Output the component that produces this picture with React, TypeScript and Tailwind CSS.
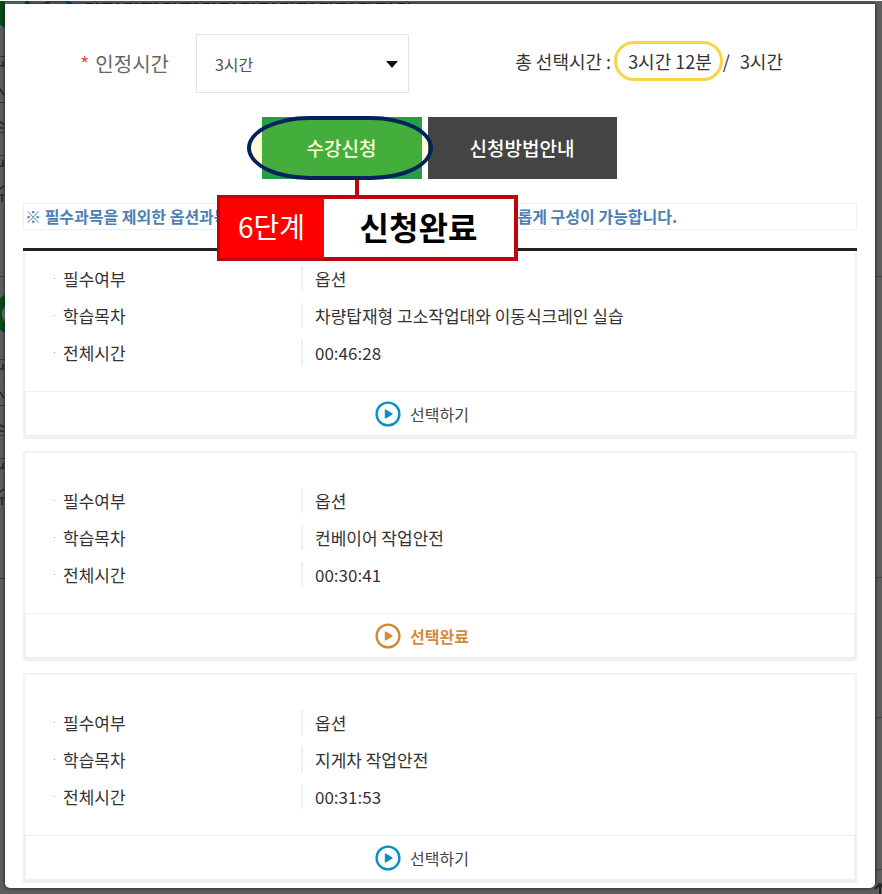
import React, { useState } from 'react';

interface Lesson {
  id: number;
  required: string;
  title: string;
  duration: string;
}

const LESSONS: Lesson[] = [
  { id: 1, required: '옵션', title: '차량탑재형 고소작업대와 이동식크레인 실습', duration: '00:46:28' },
  { id: 2, required: '옵션', title: '컨베이어 작업안전', duration: '00:30:41' },
  { id: 3, required: '옵션', title: '지게차 작업안전', duration: '00:31:53' },
];

const PlayIcon = () => (
  <svg width="26" height="26" viewBox="0 0 26 26" fill="none" aria-hidden="true">
    <circle cx="13" cy="13" r="11.4" stroke="currentColor" strokeWidth="2.4" />
    <path d="M10.5 9.2v7.6l6.6-3.8z" fill="currentColor" stroke="currentColor" strokeWidth="1.4" strokeLinejoin="round" />
  </svg>
);

// Dimmed page that shows around the modal edges
const Backdrop = () => (
  <div aria-hidden="true" className="absolute inset-0 overflow-hidden border-t border-white">
    <svg className="absolute left-0 top-0" width="100%" height="100%">
      <circle cx="12" cy="9" r="19" fill="#0b4a1c" />
      <path d="M5 2h20" stroke="#777" strokeWidth="3" />
      <circle cx="58" cy="15" r="19" fill="#124a68" />
      <path d="M50 2h16" stroke="#666" strokeWidth="2" />
      <circle cx="14" cy="313" r="21" fill="#0b4a1c" />
      <circle cx="14" cy="313" r="12" fill="#777" />
      <path d="M86 3H412" stroke="#222" strokeWidth="2" strokeDasharray="7 3 2 5 9 4 3 6" />
      <path d="M0 55.5H5M0 101.5H5M0 131.5H5M0 154.5H5M0 275.5H5M0 358.5H5M0 404.5H5M0 434.5H5M0 457.5H5M0 577.5H5" stroke="#3a3a3a" />
      <path
        d="M0 65h4M3 60v5M0 88l4 6M0 121l4 2M0 127h4M0 165h4M3 159v6M0 188l4-3M0 194h4M2 194v7M0 368h4M3 363v5M0 391l4 6M0 424l4 2M0 430h4M0 467h4M3 462v5M0 491l4-3M0 497h4M2 497v7"
        stroke="#262626"
        strokeWidth="1.5"
      />
      <path d="M875 275.5H882M875 576.5H882M875 716.5H882M875 868.5H882" stroke="#484848" />
      <path d="M875 888l5-5 5 5M880 883v11" stroke="#222" strokeWidth="2" fill="none" />
    </svg>
  </div>
);

interface LessonCardProps {
  lesson: Lesson;
  first: boolean;
  selected: boolean;
  onToggle: () => void;
}

const LessonCard: React.FC<LessonCardProps> = ({ lesson, first, selected, onToggle }) => {
  const rows = [
    ['필수여부', lesson.required],
    ['학습목차', lesson.title],
    ['전체시간', lesson.duration],
  ];

  return (
    <li>
      <div className={first ? 'border-t-3 border-[#222]' : 'border-t-2 border-[#f1f1f1]'} />
      <dl className={`border-x-2 border-[#f1f1f1] pb-5 ${first ? 'pt-[9px]' : 'pt-[29px]'}`}>
        {rows.map(([label, value]) => (
          <div key={label} className="flex h-[37px] items-center text-[17px] leading-[25px] text-[#333]">
            <dt className="flex w-[276px] shrink-0 items-center gap-2 pl-[29px]">
              <span className="size-px bg-[#999]" />
              {label}
            </dt>
            <dd className="border-l-2 border-[#eee] pl-3">{value}</dd>
          </div>
        ))}
      </dl>
      <div className="flex h-12 items-center justify-center border-x-3 border-t border-b-4 border-[#f0f0f0] pt-px pr-[36px]">
        <button
          type="button"
          onClick={onToggle}
          className={`flex items-center gap-[9px] text-[16px] leading-6 ${selected ? 'font-bold text-[#d58c38]' : 'text-[#444]'}`}
        >
          <span className={selected ? 'text-[#d08a35]' : 'text-[#0c8fc4]'}>
            <PlayIcon />
          </span>
          {selected ? '선택완료' : '선택하기'}
        </button>
      </div>
    </li>
  );
};

const App: React.FC = () => {
  const [hours, setHours] = useState('3');
  const [selected, setSelected] = useState<number[]>([2]);

  const toggle = (id: number) => {
    setSelected(prev => (prev.includes(id) ? prev.filter(v => v !== id) : [...prev, id]));
  };

  return (
    <div className="relative min-h-screen bg-[#5e5e5e] pt-1 pr-[7px] pb-[6px] pl-[5px] font-['Noto_Sans_CJK_KR','Noto_Sans',sans-serif]">
      <Backdrop />
      <main className="relative rounded-b-[5px] bg-white px-[18px] pt-[30px] pb-[5px] shadow-[0_0_4px_rgba(0,0,0,0.7)]">
        <div className="flex items-center justify-between pr-[74px] pl-[57px]">
          <div className="flex items-center">
            <label htmlFor="hours" className="text-[20px] leading-7 text-[#666]">
              <span className="mr-[6px] text-[#f05050]">*</span>
              인정시간
            </label>
            <div className="relative ml-[27px]">
              <select
                id="hours"
                value={hours}
                onChange={e => setHours(e.target.value)}
                className="h-[59px] w-[213px] appearance-none border border-[#e5e5e5] bg-white pl-[18px] text-[16px] text-[#555]"
              >
                <option value="1">1시간</option>
                <option value="2">2시간</option>
                <option value="3">3시간</option>
              </select>
              <svg className="pointer-events-none absolute top-[27px] right-[11px]" width="12" height="7" viewBox="0 0 12 7">
                <path d="M0 0h12L6 7z" fill="#111" />
              </svg>
            </div>
          </div>
          <p className="mb-[6px] flex items-center text-[18px] leading-[26px] text-[#333]">
            총 선택시간 :
            <span className="ml-[3px] flex h-10 items-center rounded-full border-3 border-[#f7d547] pr-2 pl-[11px]">3시간 12분</span>
            <span className="mr-[10px]">/</span>
            3시간
          </p>
        </div>

        <div className="mt-6 flex justify-center gap-[6px] pr-[2px] text-[19px] font-medium text-white">
          <div className="relative">
            <button type="button" className="h-[62px] w-[160px] bg-[#23a046]">
              수강신청
            </button>
            {/* Highlight ring and step callout */}
            <div className="pointer-events-none absolute -inset-y-px right-[-11px] left-[-15px] z-10 rounded-[62px/32px] border-4 border-[#04215c] bg-[#ffff00]/15" />
            <div className="absolute top-[63px] left-[93px] h-4 w-1 bg-[#bd0510]" />
            <div className="absolute top-[78px] -left-[45px] z-10 flex h-[66px] w-[301px] border-4 border-[#bd0510] bg-white leading-8">
              <span className="-my-px -ml-px flex w-[104px] items-center justify-center bg-[#fe0000] pb-1 text-[28px] font-normal text-white">
                6단계
              </span>
              <strong className="flex flex-1 items-center justify-center pb-1 text-[32px] font-bold text-black">신청완료</strong>
            </div>
          </div>
          <button type="button" className="h-[62px] w-[189px] bg-[#444]">
            신청방법안내
          </button>
        </div>

        {/* The callout covers the middle of this line */}
        <p className="mt-6 flex gap-[289px] overflow-hidden border border-[#eee] px-px text-[16px] leading-[25px] font-bold whitespace-nowrap text-[#4d7fb5]">
          <span>※ 필수과목을 제외한 옵션과목</span>
          <span>롭게 구성이 가능합니다.</span>
        </p>

        <ul className="mt-[18px] flex flex-col gap-3">
          {LESSONS.map((lesson, i) => (
            <LessonCard
              key={lesson.id}
              lesson={lesson}
              first={i === 0}
              selected={selected.includes(lesson.id)}
              onToggle={() => toggle(lesson.id)}
            />
          ))}
        </ul>
      </main>
    </div>
  );
};

export default App;
